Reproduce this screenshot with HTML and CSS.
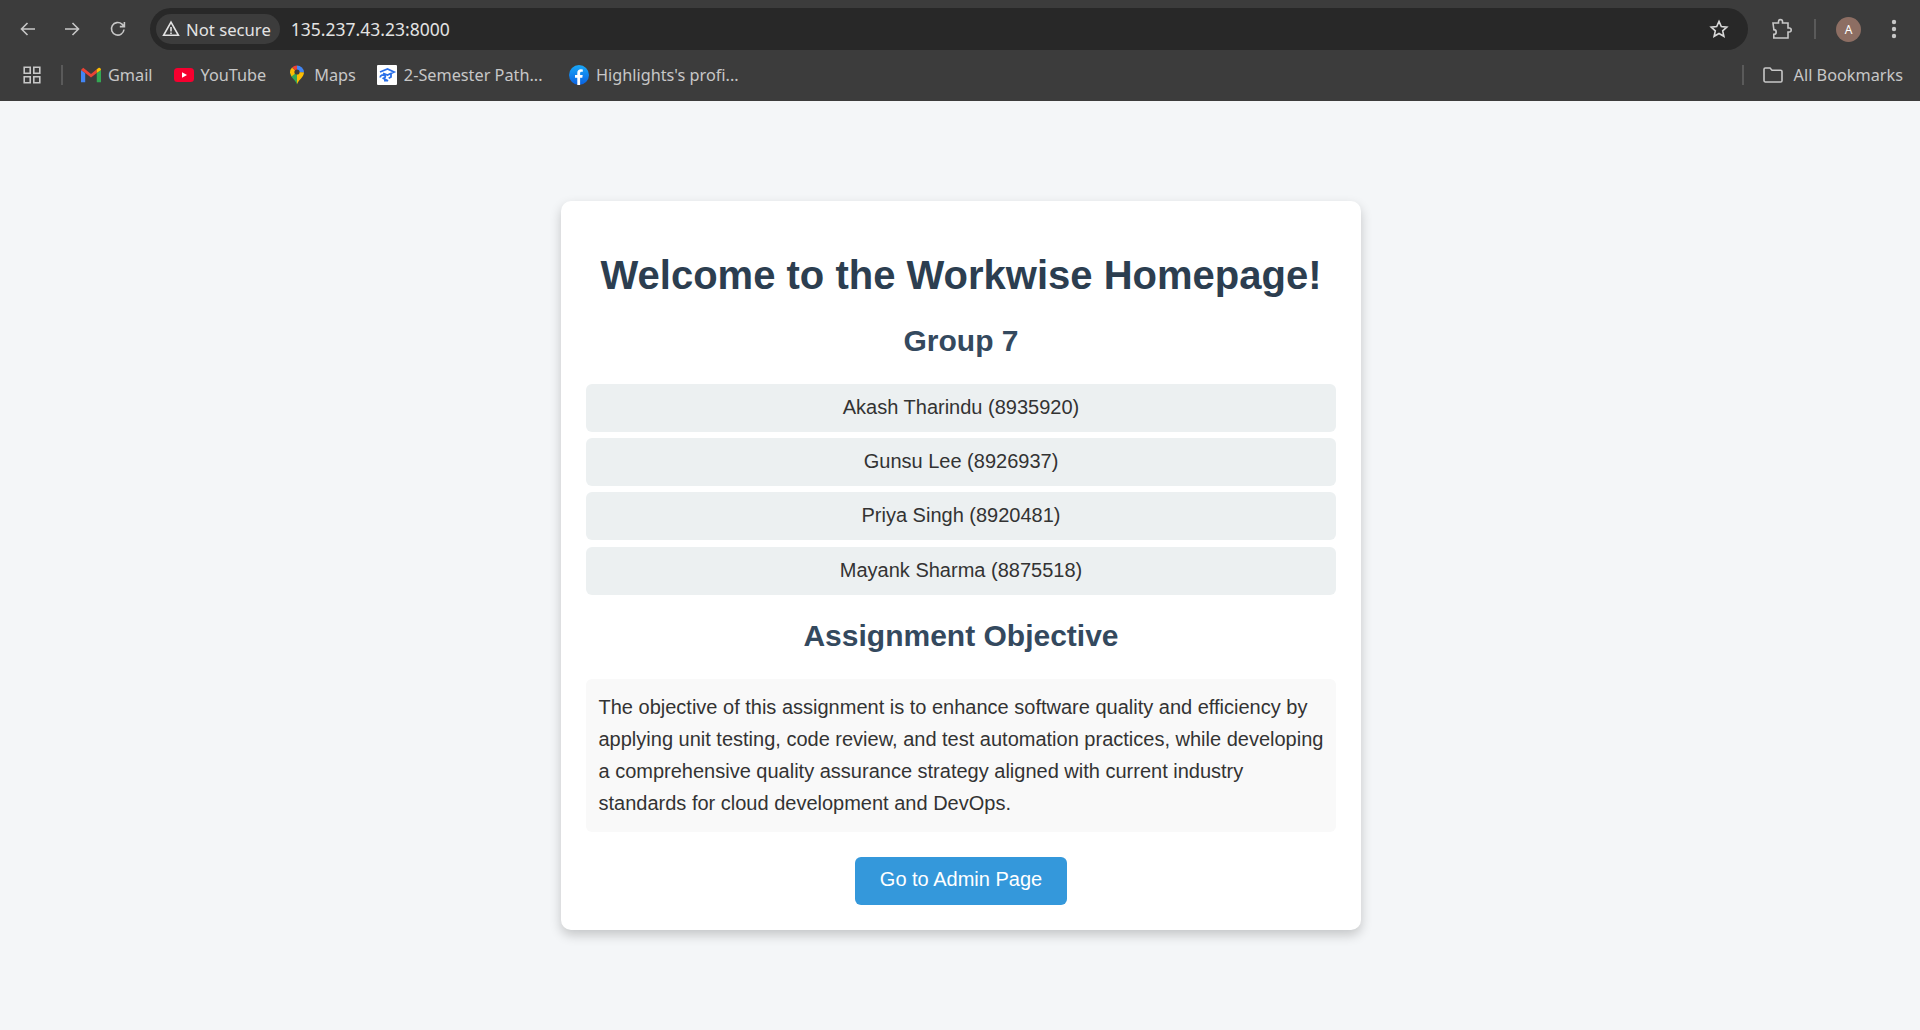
FILE: index.html
```html
<!DOCTYPE html>
<html lang="en">
<head>
<meta charset="utf-8">
<title>Workwise Homepage</title>
<link rel="stylesheet" href="styles.css">
</head>
<body>
<header class="chrome">
  <div class="toolbar">
    <div class="nav">
      <svg class="ic" viewBox="0 0 20 20"><path d="M17 10H4M9.500 4 3.500 10l6 6" class="st"/></svg>
      <svg class="ic" viewBox="0 0 20 20"><path d="M2 10h13M9.500 4l6 6-6 6" class="st"/></svg>
      <svg class="ic" viewBox="0 0 20 20"><path d="M16 10.500A6.300 6.300 0 1 1 14 5.200L16.200 7.400M16.400 3v4.600h-4.600" class="st"/></svg>
    </div>
    <div class="omnibox">
      <div class="chip">
        <svg class="warn" viewBox="0 0 18 18"><path d="M9 2.200 16.400 15.300H1.600Z" class="st"/><path d="M9 7v4.400M9 12.400v1.500" class="st"/></svg>
        <span>Not secure</span>
      </div>
      <span class="url">135.237.43.23:8000</span>
      <svg class="star" viewBox="0 0 20 20"><path d="m10 2.400 2.300 5.100 5.500.6-4.100 3.700 1.200 5.500L10 14.500l-4.900 2.800 1.200-5.500-4.100-3.700 5.500-.6Z" class="st"/></svg>
    </div>
    <div class="tools">
      <svg class="ext" viewBox="0 0 22 22"><path d="M2 5h5.500V3.600a2 2 0 0 1 4 0V5H17v5h1.200a2 2 0 0 1 0 4H17v6H2.800v-3.600a2.400 2.400 0 0 0 0-4.800V11Z" class="st"/></svg>
      <span class="vsep"></span>
      <span class="avatar">A</span>
      <svg class="dots" viewBox="0 0 6 20"><circle cx="3" cy="3" r="2.200"/><circle cx="3" cy="10" r="2.200"/><circle cx="3" cy="17" r="2.200"/></svg>
    </div>
  </div>
  <nav class="bookmarks">
    <svg class="apps" viewBox="0 0 18 18"><path d="M1.200 1.200h6v6h-6zM10.800 1.200h6v6h-6zM1.200 10.800h6v6h-6zM10.800 10.800h6v6h-6z" class="st"/></svg>
    <span class="bsep"></span>
    <a class="bm bm-gmail">
      <svg class="fav" viewBox="0 0 18 18"><path d="M0 4.500V15.500H3.800V7.300Z" fill="#4285f4"/><path d="M18 4.500V15.500H14.200V7.300Z" fill="#34a853"/><path d="M0 4.500 2 2.500 9 8 14.200 3.900V7.300L9 11.300 3.800 7.300 0 4.500Z" fill="#ea4335"/><path d="M14.200 7.300V3.900L16 2.500C17.200 2 18 3 18 4.500Z" fill="#fbbc04"/></svg>
      <span>Gmail</span>
    </a>
    <a class="bm bm-yt">
      <svg class="fav" viewBox="0 0 20 20"><rect x="0" y="3" width="20" height="14" rx="3.500" fill="#f6002f"/><path d="M8 7.300 13 10 8 12.700Z" fill="#fff"/></svg>
      <span>YouTube</span>
    </a>
    <a class="bm bm-maps">
      <svg class="fav" viewBox="0 0 20 20"><path d="M10 19.500C9 15 3 12.500 3 7.200L10 7Z" fill="#34a853"/><path d="M10 19.500C11 15 17 12.500 17 7.200L10 7Z" fill="#fbbc04"/><path d="M3 7.200A7 7 0 0 1 5 2.500L10 7 4.500 11.500Z" fill="#fbbc04"/><path d="M5 2.500A7 7 0 0 1 10 .5L10 7Z" fill="#ea4335"/><path d="M10 .5A7 7 0 0 1 17 7.200L10 7Z" fill="#4285f4"/><circle cx="10" cy="7" r="2.600" fill="#3c3c3c"/></svg>
      <span>Maps</span>
    </a>
    <a class="bm bm-sem">
      <svg class="fav" viewBox="0 0 20 20"><rect width="20" height="20" rx="1" fill="#fff"/><path d="M3 7 10.500 4l6.500 3-6.500 3-4.500-1.700M14 8.500v3.500l-2.300 1.300M3.200 12.500c0-2.500 3-3 4.600-1.900 1.100.9.400 2.200-1.100 2.200M5.500 13l5.500 2.700H7" fill="none" stroke="#2a6fe8" stroke-width="1.800"/></svg>
      <span>2-Semester Path...</span>
    </a>
    <a class="bm bm-fb">
      <svg class="fav" viewBox="0 0 20 20"><defs><linearGradient id="fb" x1="0" y1="0" x2="0" y2="1"><stop offset="0" stop-color="#19a8f8"/><stop offset="1" stop-color="#0a60e0"/></linearGradient></defs><circle cx="10" cy="10" r="10" fill="url(#fb)"/><path d="M8.300 20V12.800H6V10h2.300V7.800C8.300 5.400 9.700 4.200 11.800 4.200l2 .2v2.400h-1.200c-1.100 0-1.500.6-1.500 1.400V10h2.600l-.4 2.800h-2.200V20Z" fill="#fff"/></svg>
      <span>Highlights's profi...</span>
    </a>
    <span class="bsep bsep-right"></span>
    <a class="bm bm-all">
      <svg class="folder" viewBox="0 0 20 16"><path d="M1 2.300C1 1.500 1.500 1 2.300 1H7l2 2.200h8.700c.8 0 1.300.5 1.300 1.300v9.200c0 .8-.5 1.300-1.300 1.300H2.300C1.500 14.800 1 14.300 1 13.500Z" class="st"/></svg>
      <span>All Bookmarks</span>
    </a>
  </nav>
</header>
<main class="page">
  <section class="card">
    <h1 class="title">Welcome to the Workwise Homepage!</h1>
    <h2 class="subtitle">Group 7</h2>
    <ul class="members">
      <li class="member">Akash Tharindu (8935920)</li>
      <li class="member">Gunsu Lee (8926937)</li>
      <li class="member">Priya Singh (8920481)</li>
      <li class="member">Mayank Sharma (8875518)</li>
    </ul>
    <h2 class="subtitle">Assignment Objective</h2>
    <p class="objective">The objective of this assignment is to enhance software quality and efficiency by applying unit testing, code review, and test automation practices, while developing a comprehensive quality assurance strategy aligned with current industry standards for cloud development and DevOps.</p>
    <a class="btn">Go to Admin Page</a>
  </section>
</main>
</body>
</html>
```
FILE: styles.css
```css
* { box-sizing: border-box; }
html, body { margin: 0; height: 100%; }
body {
  display: flex;
  flex-direction: column;
  height: 1030px;
  overflow: hidden;
  background: #f4f6f8;
  font-family: "Liberation Sans", Arial, sans-serif;
}
.st { fill: none; stroke: currentColor; stroke-width: 1.6; }

.chrome {
  flex: 0 0 101px;
  background: #3c3c3c;
  font-family: "Noto Sans", sans-serif;
  color: #c7c7c7;
}
.toolbar {
  height: 50px;
  padding: 8px 0 0 18px;
  display: flex;
  align-items: flex-start;
}
.nav {
  display: flex;
  gap: 25px;
  height: 42px;
  align-items: center;
  width: 132px;
}
.ic { width: 20px; height: 20px; color: #c7c7c7; }
.omnibox {
  width: 1598px;
  height: 42px;
  background: #282828;
  border-radius: 21px;
  display: flex;
  align-items: center;
  padding: 0 19px 0 6px;
  color: #e3e3e3;
}
.chip {
  height: 30px;
  border-radius: 15px;
  background: #3c3c3c;
  display: flex;
  align-items: center;
  gap: 6px;
  padding: 0 9px 0 6px;
  font-size: 16.7px;
}
.warn { width: 18px; height: 18px; color: #e3e3e3; }
.url { margin-left: 11px; font-size: 17.5px; flex: 1; }
.star { width: 20px; height: 20px; color: #d8d8d8; }
.tools {
  flex: 1;
  height: 42px;
  display: flex;
  align-items: center;
  padding-left: 23px;
}
.ext { width: 22px; height: 22px; color: #c7c7c7; }
.vsep { width: 2px; height: 20px; background: #5a5a5a; margin-left: 21px; }
.avatar {
  width: 25px;
  height: 25px;
  margin-left: 20px;
  border-radius: 50%;
  background: #8d6e63;
  color: #fff;
  font-size: 12px;
  display: flex;
  align-items: center;
  justify-content: center;
}
.dots { width: 6px; height: 20px; margin-left: 30px; fill: #c7c7c7; }

.bookmarks {
  height: 51px;
  padding: 0 0 1px 23px;
  display: flex;
  align-items: center;
  font-size: 16.25px;
  color: #c7c7c7;
}
.apps { width: 18px; height: 18px; color: #c7c7c7; }
.bsep { width: 2px; height: 20px; background: #5a5a5a; margin-left: 20px; }
.bm { display: flex; align-items: center; gap: 7px; white-space: nowrap; }
.fav { width: 20px; height: 20px; display: block; }
.bm-gmail { margin-left: 18px; }
.bm-yt { margin-left: 21px; }
.bm-maps { margin-left: 21px; }
.bm-sem { margin-left: 21px; }
.bm-fb { margin-left: 26.5px; }
.bsep-right { margin-left: auto; }
.bm-all { margin-left: 19px; padding-right: 17px; gap: 11px; }
.folder { width: 20px; height: 16px; color: #c7c7c7; }

.page {
  flex: 1;
  display: flex;
  align-items: center;
  justify-content: center;
  padding-left: 2px;
}
.card {
  width: 800px;
  padding: 25px;
  background: #fff;
  border-radius: 10px;
  box-shadow: 0 5px 12px rgba(0, 0, 0, 0.2);
  text-align: center;
}
.title {
  margin: 26.8px 0 25.8px;
  font-size: 40px;
  color: #2c3e50;
}
.subtitle {
  margin: 23.9px 0 25.9px;
  font-size: 30px;
  color: #34495e;
}
.members { list-style: none; margin: 0; padding: 0; }
.member {
  margin: 6.25px 0;
  padding: 12px 12.5px 13px;
  background: #ecf0f1;
  border-radius: 6px;
  font-size: 20px;
  color: #333;
}
.objective {
  margin: 25px 0;
  padding: 12.5px;
  background: #f9f9f9;
  border-radius: 6px;
  font-size: 20px;
  line-height: 32px;
  text-align: left;
  color: #333;
}
.btn {
  display: inline-block;
  padding: 11.5px 25px 13.5px;
  background: #3498db;
  border-radius: 6px;
  font-size: 20px;
  color: #fff;
}
```
